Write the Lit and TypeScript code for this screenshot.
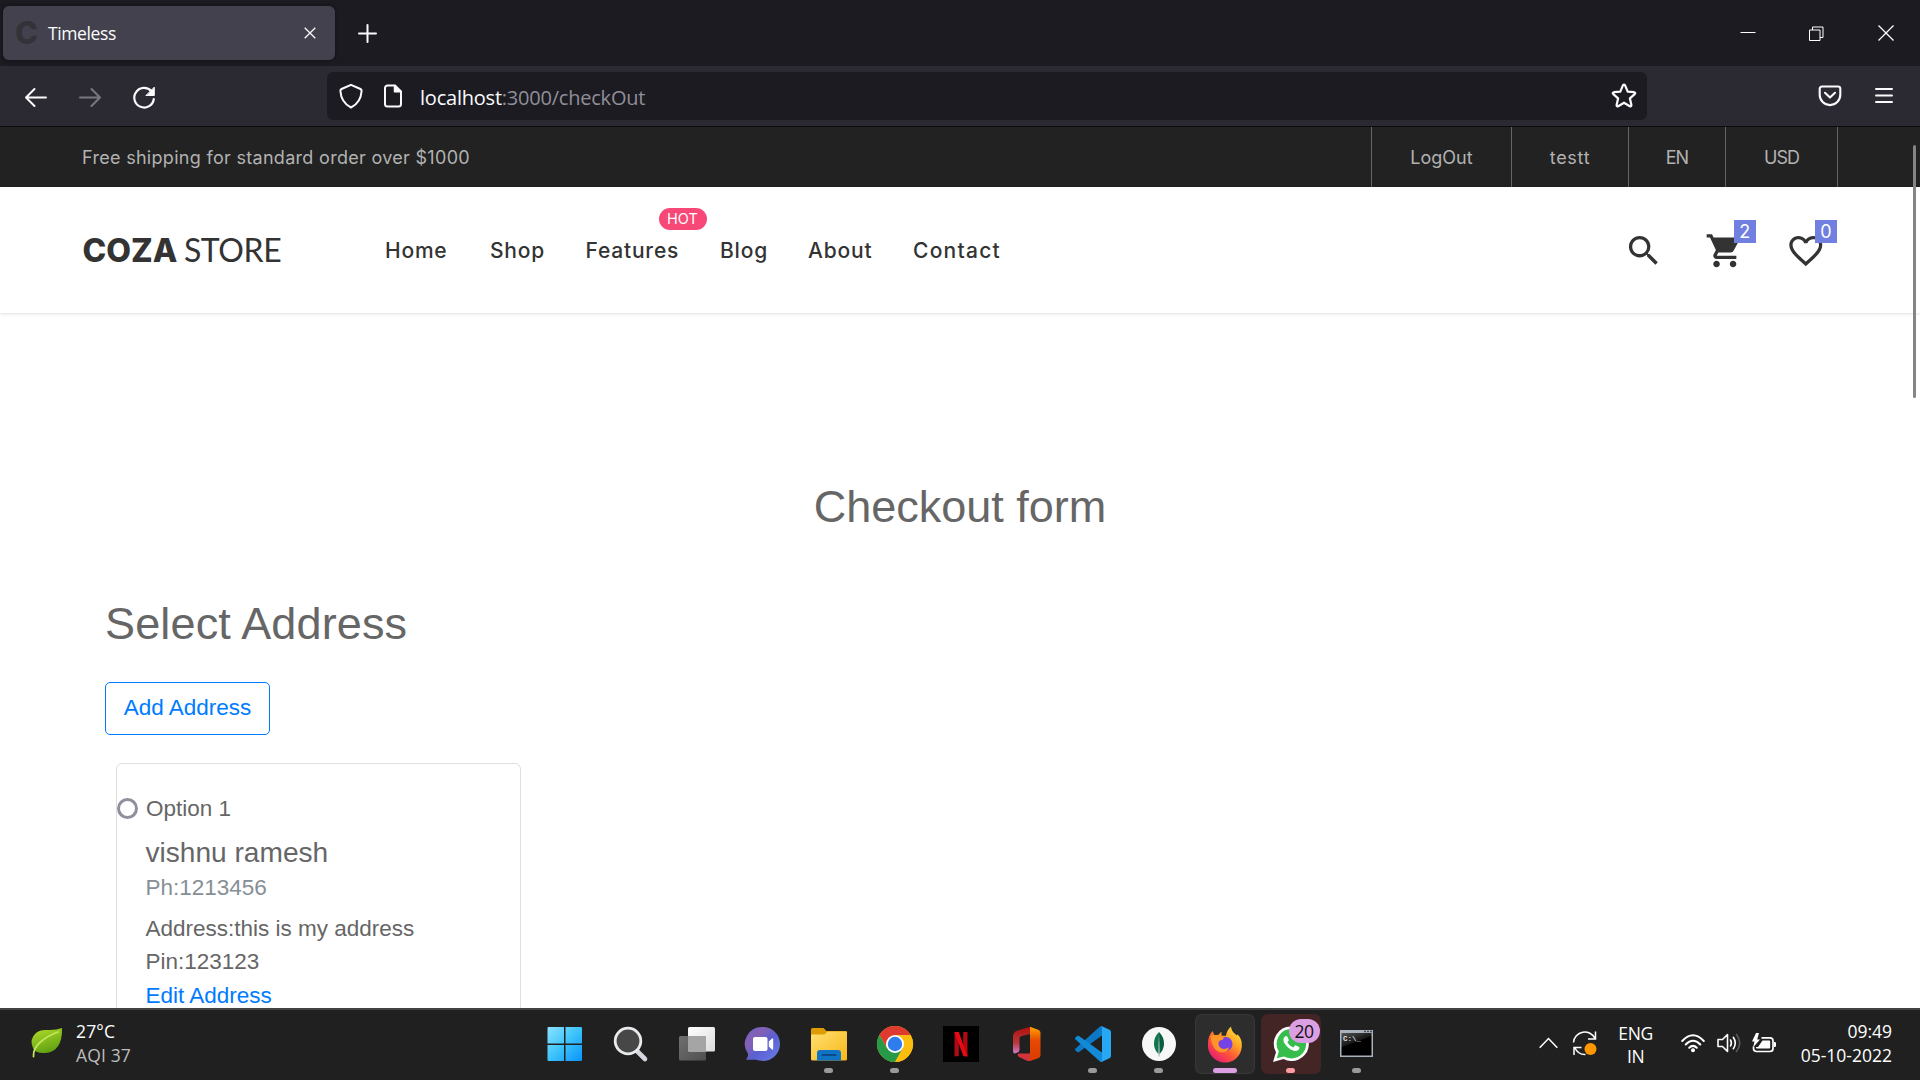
import { LitElement, html, css, svg, TemplateResult } from 'lit';
import { customElement } from 'lit/decorators.js';

@customElement('browser-chrome')
class BrowserChrome extends LitElement {
  static styles = css`
    :host { display: block; height: 127px; font-family: 'Open Sans', 'Noto Sans', sans-serif; color: #fbfbfe; }
    svg { display: block; flex: none; overflow: visible; }
    .titlebar { display: flex; align-items: center; height: 66px; background: #1c1b22; box-sizing: border-box; padding-left: 3px; }
    .tab { display: flex; align-items: center; width: 332px; height: 54px; border-radius: 6px; background: #42414d; box-sizing: border-box; padding: 0 19px 0 13px; box-shadow: 0 0 4px rgba(0,0,0,.45); }
    .favicon { width: 24px; font: 800 31px/54px 'Inter', sans-serif; color: #333337; margin-left: -1px; }
    .title { font-size: 17.5px; letter-spacing: -.38px; margin-left: 9px; flex: 1; }
    .plus { margin-left: 23px; }
    .controls { display: flex; align-items: center; margin-left: auto; padding-right: 26px; }
    .controls svg:nth-child(2) { margin-left: 53px; }
    .controls svg:nth-child(3) { margin-left: 54px; }
    .toolbar { display: flex; align-items: center; height: 61px; box-sizing: border-box; background: #2b2a33; border-bottom: 1px solid #0c0c0d; padding-left: 24px; }
    .nav { display: flex; gap: 30px; width: 303px; padding-top: 1px; }
    .url { display: flex; align-items: center; width: 1320px; height: 48px; border-radius: 6px; background: #1c1b22; box-sizing: border-box; padding: 0 10px 0 12px; }
    .doc { margin-left: 20px; }
    .address { flex: 1; font-size: 20px; letter-spacing: -.22px; margin-left: 17px; padding-top: 2px; color: #8f8f98; }
    .address b { font-weight: 400; color: #fbfbfe; }
    .pocket { margin-left: 171px; }
    .burger { margin-left: 33px; }
  `;
  render() {
    return html`
      <div class="titlebar">
        <div class="tab">
          <span class="favicon">C</span><span class="title">Timeless</span>
          <svg width="12" height="12" viewBox="0 0 12 12" stroke="#fbfbfe" stroke-width="1.3"><path d="M.7.7 11.3 11.3M11.3.7.7 11.3"/></svg>
        </div>
        <svg class="plus" width="19" height="19" viewBox="0 0 19 19" stroke="#fbfbfe" stroke-width="2" stroke-linecap="round"><path d="M9.5 1v17M1 9.5h17"/></svg>
        <div class="controls">
          <svg width="16" height="16" viewBox="0 0 16 16" stroke="#fff"><path d="M.5 7.5h15"/></svg>
          <svg width="15" height="15" viewBox="0 0 15 15" stroke="#fff" fill="none"><path d="M.5 4h10.5v10.5H.5zM3.5 4V1h10.500v10.500H11"/></svg>
          <svg width="16" height="16" viewBox="0 0 16 16" stroke="#fff" stroke-width="1.3"><path d="M.5.5l15 15M15.5.5l-15 15"/></svg>
        </div>
      </div>
      <div class="toolbar">
        <div class="nav">
          <svg width="24" height="24" viewBox="0 0 24 24" fill="none" stroke="#fbfbfe" stroke-width="2" stroke-linecap="round" stroke-linejoin="round"><path d="M22 12.500H2M10.500 4 2 12.500l8.500 8.500"/></svg>
          <svg width="24" height="24" viewBox="0 0 24 24" fill="none" stroke="#79787f" stroke-width="2" stroke-linecap="round" stroke-linejoin="round"><path d="M2 12.500h20M13.500 4l8.500 8.500-8.500 8.500"/></svg>
          <svg width="24" height="24" viewBox="0 0 24 24" fill="none" stroke="#fbfbfe" stroke-width="2.200" stroke-linecap="round"><path d="M19.500 6.300A9.800 9.800 0 1 0 21.800 14"/><path d="M22.300 2.500v8h-8z" fill="#fbfbfe" stroke-width="1" stroke-linejoin="round"/></svg>
        </div>
        <div class="url">
          <svg width="24" height="26" viewBox="0 0 24 26" fill="none" stroke="#fbfbfe" stroke-width="2" stroke-linejoin="round"><path d="M12 1.800 21.500 6c1 .5 1.200 1 1.100 2-.5 8-4.500 13.500-10.600 16.500C5.900 21.500 1.900 16 1.400 8c-.1-1 .1-1.500 1.100-2z"/></svg>
          <svg class="doc" width="20" height="24" viewBox="0 0 20 24" fill="none" stroke="#fbfbfe" stroke-width="2"><path d="M4 1.500h8L18 7.500V20a2.500 2.500 0 0 1-2.500 2.500h-11A2.500 2.500 0 0 1 2 20V4A2.500 2.500 0 0 1 4.500 1.500z"/><path d="M11.500 1.500v6.300H18z" fill="#fbfbfe" stroke-linejoin="round" stroke-width="1.500"/></svg>
          <span class="address"><b>localhost</b>:3000/checkOut</span>
          <svg width="26" height="26" viewBox="0 0 26 26" fill="none" stroke="#fbfbfe" stroke-width="2.200" stroke-linejoin="round"><path d="M11.800 2.600q1.200-1.800 2.400 0l2.500 6 6.300.6q2 .5.700 1.900l-4.800 4.300 1.500 6.500q.2 2-1.600 1.300L13 19.700l-5.800 3.500q-1.800.7-1.600-1.300l1.500-6.500-4.800-4.300q-1.300-1.400.7-1.900l6.300-.6z"/></svg>
        </div>
        <svg class="pocket" width="24" height="22" viewBox="0 0 24 22" fill="none" stroke="#fbfbfe" stroke-width="2.100" stroke-linecap="round" stroke-linejoin="round"><path d="M4 1.500h16a2.300 2.300 0 0 1 2.300 2.300v6a10.300 10.300 0 0 1-20.600 0v-6A2.300 2.300 0 0 1 4 1.500z"/><path d="m7 7.800 5 4.800 5-4.800"/></svg>
        <svg class="burger" width="18" height="18" viewBox="0 0 18 18" stroke="#fbfbfe" stroke-width="2" stroke-linecap="round"><path d="M1 2h16M1 8.500h16M1 15h16"/></svg>
      </div>`;
  }
}

const NAV: [string, number][] = [['Home', 105], ['Shop', 95.5], ['Features', 134.5], ['Blog', 88], ['About', 105], ['Contact', 95]];
const TOP: [string, number][] = [['LogOut', 140], ['testt', 117], ['EN', 97], ['USD', 112]];

@customElement('store-header')
class StoreHeader extends LitElement {
  static styles = css`
    :host { display: block; font-family: 'Inter', sans-serif; }
    .top { display: flex; align-items: center; height: 60px; background: #222; color: #b2b2b2; font-size: 18px; letter-spacing: .3px; padding: 0 82px; }
    .links { display: flex; margin-left: auto; height: 60px; border-left: 1px solid #666; }
    .links span { display: flex; align-items: center; justify-content: center; box-sizing: border-box; border-right: 1px solid #666; letter-spacing: 0; }
    .links span:nth-child(2) { letter-spacing: .7px; }
    .links span:nth-child(n+3) { letter-spacing: -1px; }
    .main { display: flex; align-items: center; height: 126px; background: #fff; box-shadow: 0 0 4px rgba(0,0,0,.2); padding: 0 81px 0 82.500px; position: relative; box-sizing: border-box; color: #333; }
    .logo { display: flex; align-items: baseline; width: 302.500px; gap: 6.500px; }
    .logo b { font: 800 32px 'Inter', sans-serif; }
    .logo span { font: 400 32px 'Lato', sans-serif; letter-spacing: -.4px; }
    .menu { display: flex; font-size: 21px; font-weight: 500; letter-spacing: .8px; }
    .menu span { position: relative; }
    .menu span:last-child { letter-spacing: 1.250px; }
    .hot { position: absolute; left: 73px; top: -29.500px; width: 48px; height: 22px; border-radius: 11px; background: #f74877; color: #fff; font: 400 14.500px/22px 'Inter', sans-serif; letter-spacing: 0; text-align: center; }
    .icons { display: flex; gap: 41.500px; margin-left: auto; padding: 1px 13.500px 0 0; }
    .icon { position: relative; }
    svg { display: block; width: 39.600px; height: 39.600px; fill: #333; }
    .badge { position: absolute; left: 29px; top: -11px; width: 22px; height: 23px; background: #717fe0; color: #fff; font-size: 18px; line-height: 23px; text-align: center; }
  `;
  render() {
    return html`
      <div class="top"><span>Free shipping for standard order over $1000</span>
        <div class="links">${TOP.map(([t, w]) => html`<span style="width:${w}px">${t}</span>`)}</div>
      </div>
      <div class="main">
        <div class="logo"><b>COZA</b><span>STORE</span></div>
        <nav class="menu">${NAV.map(([t, w]) => html`<span style="width:${w}px">${t}${t === 'Features' ? html`<i class="hot">HOT</i>` : ''}</span>`)}</nav>
        <div class="icons">
          <div class="icon"><svg viewBox="0 0 24 24"><path d="M15.500 14h-.79l-.28-.27A6.471 6.471 0 0 0 16 9.500 6.500 6.500 0 1 0 9.500 16c1.610 0 3.090-.59 4.230-1.570l.27.28v.79l5 4.990L20.490 19l-4.990-5zm-6 0C7.010 14 5 11.990 5 9.500S7.010 5 9.500 5 14 7.010 14 9.500 11.990 14 9.500 14z"/></svg></div>
          <div class="icon"><svg viewBox="0 0 24 24"><path d="M7 18c-1.100 0-1.990.9-1.990 2S5.900 22 7 22s2-.9 2-2-.9-2-2-2zM1 2v2h2l3.600 7.590-1.350 2.450c-.16.280-.25.610-.25.960 0 1.100.9 2 2 2h12v-2H7.420c-.14 0-.25-.11-.25-.25l.03-.12.900-1.630h7.450c.75 0 1.410-.41 1.750-1.030l3.580-6.490A1.003 1.003 0 0 0 20 4H5.210l-.94-2H1zm16 16c-1.100 0-1.990.9-1.990 2s.89 2 1.990 2 2-.9 2-2-.9-2-2-2z"/></svg><span class="badge">2</span></div>
          <div class="icon"><svg viewBox="0 0 24 24"><path d="M16.500 3c-1.740 0-3.410.81-4.500 2.090C10.910 3.810 9.240 3 7.500 3 4.420 3 2 5.420 2 8.500c0 3.780 3.400 6.860 8.550 11.540L12 21.350l1.450-1.320C18.600 15.360 22 12.280 22 8.500 22 5.420 19.580 3 16.500 3zm-4.400 15.550l-.1.100-.1-.1C7.140 14.240 4 11.390 4 8.500 4 6.500 5.500 5 7.500 5c1.540 0 3.040.99 3.570 2.360h1.870C13.460 5.990 14.960 5 16.500 5c2 0 3.500 1.500 3.500 3.500 0 2.890-3.140 5.740-7.900 10.050z"/></svg><span class="badge">0</span></div>
        </div>
      </div>`;
  }
}

@customElement('checkout-page')
class CheckoutPage extends LitElement {
  static styles = css`
    :host { display: block; font-family: 'Liberation Sans', Arial, sans-serif; color: #666; font-size: 22.500px; line-height: 33.750px; padding: 167px 105px 0; }
    h2 { margin: 0; font-size: 45px; font-weight: 400; line-height: 54px; letter-spacing: .15px; }
    .title { text-align: center; margin-bottom: 63px; letter-spacing: 0; }
    .add { display: flex; align-items: center; justify-content: center; width: 165px; height: 53px; box-sizing: border-box; border: 1px solid #007bff; border-radius: 5px; color: #007bff; margin: 31px 0 28px; padding-bottom: 1px; }
    .card { margin-left: 11px; width: 405px; height: 400px; box-sizing: border-box; border: 1px solid #dfdfdf; border-radius: 6px; padding-top: 28px; }
    .option { display: flex; align-items: center; gap: 8px; }
    .radio { width: 21px; height: 21px; box-sizing: border-box; border: 3px solid #8f8f9d; border-radius: 50%; }
    .info { padding-left: 28.500px; }
    .name { font-size: 28.100px; line-height: 34px; margin-top: 10px; }
    .phone { color: #868e96; margin: 1px 0 7px; }
    .edit { color: #007bff; }
  `;
  render() {
    return html`
      <h2 class="title">Checkout form</h2>
      <h2>Select Address</h2>
      <div class="add">Add Address</div>
      <div class="card">
        <div class="option"><span class="radio"></span><span>Option 1</span></div>
        <div class="info">
          <div class="name">vishnu ramesh</div>
          <div class="phone">Ph:1213456</div>
          <div>Address:this is my address</div>
          <div>Pin:123123</div>
          <div class="edit">Edit Address</div>
        </div>
      </div>`;
  }
}

const APPS: { art: TemplateResult; mark?: string; box?: string; count?: string }[] = [
  { art: svg`<defs><linearGradient id="w" gradientUnits="userSpaceOnUse" x1="1" y1="1" x2="35" y2="35"><stop offset="0" stop-color="#8be2ff"/><stop offset=".5" stop-color="#3cc3fb"/><stop offset="1" stop-color="#0a93fb"/></linearGradient></defs><path fill="url(#w)" d="M1.500 1H17v16.500H.500V2q0-1 1-1zM18.500 1H34q1 0 1 1v15.500H18.500zM.500 19H17v16H1.500q-1 0-1-1zM18.500 19H35v15q0 1-1 1H18.500z"/>` },
  { art: svg`<path d="m24 25 8 8" stroke="#d4d6de" stroke-width="4.600" stroke-linecap="round"/><circle cx="15" cy="15" r="12.800" fill="#474747" stroke="#e9eaee" stroke-width="2.800"/>` },
  { art: svg`<defs><linearGradient id="t1" x1="0" y1="0" x2="1" y2="1"><stop stop-color="#fff"/><stop offset="1" stop-color="#dcdcdc"/></linearGradient><linearGradient id="t2" x1="0" y1="0" x2="1" y2="1"><stop stop-color="#707070"/><stop offset="1" stop-color="#505050"/></linearGradient></defs><rect x="0" y="10" width="27" height="24.500" rx="1.500" fill="url(#t2)"/><rect x="9" y="1" width="27" height="24.500" rx="1.500" fill="url(#t1)"/><path d="M9 10h18v15.500H10.500Q9 25.500 9 24z" fill="#a5a5a5"/>` },
  { art: svg`<defs><linearGradient id="m" x1="0" y1="0" x2="1" y2="1"><stop stop-color="#6b62c8"/><stop offset=".3" stop-color="#8560b4"/><stop offset=".55" stop-color="#5b5fd0"/><stop offset="1" stop-color="#6a80e6"/></linearGradient></defs><path fill="url(#m)" d="M18 1a17 17 0 1 1 0 34q-4-.2-7-1.200H1q2.500-3.500 2-6A17 17 0 0 1 18 1z" /><rect x="8" y="11" width="14.500" height="14" rx="2" fill="#fff"/><path d="M23.800 15.500l3.200-3q1.200-.5 1.200.8v9.500q0 1.300-1.200.8l-3.200-3z" fill="#fff"/>` },
  { art: svg`<defs><linearGradient id="e" x1="0" y1="0" x2="1" y2="1"><stop stop-color="#ffdf74"/><stop offset="1" stop-color="#f9b816"/></linearGradient></defs><path fill="#dd9c04" d="M1.500 2h11l3 3H34q2 0 2 2v6H0V3.500Q0 2 1.500 2z"/><path fill="url(#e)" d="M0 8.500h13.500l3-3H36V33q0 1.500-1.500 1.500h-33Q0 34.500 0 33z"/><path fill="#0f74c5" d="M6 34.500V27q0-3 3-3h18q3 0 3 3v7.500z"/><path d="M11.500 29h13" stroke="#0b4a86" stroke-width="1.800" stroke-linecap="round"/>`, mark: 'dot' },
  { art: svg`<circle cx="18" cy="18" r="18" fill="#fdbd0e"/><path fill="#df3a2f" d="M2.400 9A18 18 0 0 1 33.600 9H18L9 20z"/><path fill="#269a49" d="M2.400 9A18 18 0 0 0 18 36l7.700-13.500L10.200 22.500z"/><path fill="#fdbd0e" d="M18 9h15.600A18 18 0 0 1 18 36l8-14z"/><circle cx="18" cy="18" r="9" fill="#fff"/><circle cx="18" cy="18" r="7.200" fill="#2f7cec"/>`, mark: 'dot' },
  { art: svg`<path fill="#000" d="M0 0h36v36H0z"/><path fill="#b00b12" d="M11.500 6h4.300v24q-2.200.1-4.300.5zM20.200 6h4.300v24.500q-2.100-.4-4.300-.5z"/><path fill="#e50a15" d="M11.500 6h4.300l8.700 24.500q-2.200-.3-4.200-.5z"/>` },
  { art: svg`<defs><linearGradient id="o" x1="0" y1="0" x2="0" y2="1"><stop stop-color="#b00f0c"/><stop offset=".6" stop-color="#b8383c"/><stop offset="1" stop-color="#d57ad0"/></linearGradient><linearGradient id="o2" x1="0" y1="0" x2="0" y2="1"><stop stop-color="#ffa400"/><stop offset=".4" stop-color="#e84a05"/><stop offset="1" stop-color="#d83b01"/></linearGradient></defs><path fill="url(#o)" d="M21.500.8 8.500 4.500Q4 6 4 10v15q0 2.500 2 2.500L9.500 26q1-.8 1-2.500V12.500q0-2 2-2.500l9-2z"/><path fill="url(#o2)" d="M21 .8 28.500 3.500Q31.500 4.500 31.500 7v22q0 2.500-3 3.500l-7.500 2.500z"/><path fill="#d3343a" d="M9.500 27.500H21V35q-1.500.2-3-.3l-8-3.800q-2.500-1.700-.5-3.400z"/>` },
  { art: svg`<path fill="#0b79c6" d="M.5 24.500q-1-1 0-2L25 .6Q26 0 27 0v9.500L4 26q-1 .6-1.800 0z"/><path fill="#138ad8" d="M.5 11.500q-1 1 0 2L25 35.400Q26 36 27 36v-9.500L4 10q-1-.6-1.800 0z"/><path fill="#28a8f3" d="M25.500.4Q26.500 0 27.500.4l7 3.400Q36 4.600 36 6v24q0 1.400-1.500 2.200l-7 3.400q-1.500.6-2.500-.4 2 .8 2-1.700V2.200Q27 0 25.500.4z"/>`, mark: 'dot' },
  { art: svg`<circle cx="18" cy="18" r="17" fill="#f7f7f7"/><path fill="#10774c" d="M18 6q-5.500 5.500-5 12.500.4 5.500 4.500 9.500z"/><path fill="#0c5c40" d="M18 6q5.500 5.500 5 12.500-.4 5.500-4.500 9.500z"/><path d="M18 16v14.500" stroke="#7d9c90" stroke-width=".8"/>`, mark: 'dot' },
  { art: svg`<defs><linearGradient id="f" x1="1" y1="0" x2=".2" y2="1"><stop stop-color="#fff04a"/><stop offset=".35" stop-color="#ffae25"/><stop offset=".65" stop-color="#ff5638"/><stop offset="1" stop-color="#e3157c"/></linearGradient></defs><path fill="url(#f)" d="M3 8.500 5.500 5l2 4.200 4-.4 3-3.300v4q3 .5 4.500.2.5-5 5-9.200.5 5 4 7.200l1.500 1.800 1-1.200q5 5 4.300 12.500A16.900 16.900 0 0 1 1 18.500Q1 12 3 8.500z"/><circle cx="18.500" cy="18" r="7" fill="#7542e5"/><path fill="#ff9527" d="M3.500 10q5-2 9.500 0l3.500 1.500q1 2-3.500 3-2.500 1-1.500 4.500 2 4.500 7 3.800l3.500-1.300q-2 5.500-8.500 4.800Q5 24.500 3.500 10z"/>`, mark: 'wide', box: 'active' },
  { art: svg`<path fill="#fff" d="M18.500.5a17.300 17.300 0 1 1-8 32.600L0 36l3-9.800A17.300 17.300 0 0 1 18.500.5z"/><path fill="#37bd4b" d="M18.500 3a14.700 14.700 0 1 1-7.400 27.400L3.800 32.300l2-7A14.700 14.700 0 0 1 18.500 3z"/><path fill="#fff" transform="translate(2.500 1.700) scale(1.320)" d="M17.472 14.382c-.297-.149-1.758-.867-2.030-.967-.273-.099-.471-.148-.67.15-.197.297-.767.966-.94 1.164-.173.199-.347.223-.644.075-.297-.15-1.255-.463-2.390-1.475-.883-.788-1.480-1.761-1.653-2.059-.173-.297-.018-.458.13-.606.134-.133.298-.347.446-.52.149-.174.198-.298.298-.497.099-.198.05-.371-.025-.52-.075-.149-.669-1.612-.916-2.207-.242-.579-.487-.5-.669-.51-.173-.008-.371-.01-.57-.01-.198 0-.52.074-.792.372-.272.297-1.040 1.016-1.040 2.479 0 1.462 1.065 2.875 1.213 3.074.149.198 2.096 3.200 5.077 4.487.709.306 1.262.489 1.694.625.712.227 1.360.195 1.871.118.571-.085 1.758-.719 2.006-1.413.248-.694.248-1.289.173-1.413-.074-.124-.272-.198-.57-.347"/>`, mark: 'pink', box: 'alert', count: '20' },
  { art: svg`<defs><linearGradient id="c" x1="0" y1="0" x2=".5" y2="1"><stop stop-color="#555"/><stop offset=".5" stop-color="#161616"/><stop offset=".52" stop-color="#000"/></linearGradient></defs><path fill="#aab2bd" d="M1 4h33v27H1z"/><path fill="url(#c)" d="M2.500 7h30v22.500h-30z"/><path fill="#444b55" d="M25 4.800h2v1.400h-2zm3 0h2v1.400h-2zm3 0h2v1.400h-2z"/><text x="4" y="14.500" font-family="Liberation Mono" font-weight="700" font-size="7.500" fill="#ddd">C:\\_</text>`, mark: 'dot' },
];

@customElement('task-bar')
class TaskBar extends LitElement {
  static styles = css`
    :host { display: grid; grid-template-columns: 534.500px 1fr auto; height: 72px; box-sizing: border-box; background: #202020; border-top: 2px solid #424242; font: 17.500px/24px 'Open Sans', 'Noto Sans', sans-serif; color: #fff; position: relative; }
    svg { display: block; flex: none; overflow: visible; }
    .weather { display: flex; padding: 17px 0 0 30px; gap: 13px; }
    .weather p { margin: -8px 0 0; letter-spacing: .15px; }
    .dim { color: #bdbdbd; }
    .apps { display: flex; gap: 6px; padding-top: 4px; }
    .app { width: 60px; height: 60px; box-sizing: border-box; border-radius: 7px; display: flex; flex-direction: column; align-items: center; padding-top: 12px; position: relative; }
    .active { background: #2d2d2d; box-shadow: inset 0 0 0 1px #383838; }
    .alert { background: #442526; }
    .mark { width: 9px; height: 5px; border-radius: 3px; background: #9a9a9a; margin-top: 6px; }
    .wide { width: 24px; background: #dc9fe4; }
    .pink { background: #fc9da0; }
    .count { position: absolute; left: 28px; top: 5px; width: 31px; height: 24px; border-radius: 12px; background: #dc9fe4; color: #111; text-align: center; line-height: 24px; letter-spacing: -.6px; }
    .tray { display: flex; align-items: center; padding-right: 28px; box-sizing: border-box; height: 66px; }
    .sync { margin-left: 14px; }
    .lang { width: 36px; margin-left: 20px; text-align: center; line-height: 23px; letter-spacing: -.3px; white-space: nowrap; padding-top: 3px; }
    .wifi { margin-left: 27px; }
    .vol { margin-left: 12px; }
    .bat { margin-left: 11px; }
    .clock { margin-left: 25px; text-align: right; letter-spacing: 0; }
  `;
  render() {
    return html`
      <div class="weather">
        <svg width="33" height="32" viewBox="0 0 33 32"><defs><linearGradient id="l" x1="0" y1="0" x2=".4" y2="1"><stop stop-color="#b4de2c"/><stop offset="1" stop-color="#63a312"/></linearGradient></defs><path fill="url(#l)" d="M32 1Q32.500 25 15 26 5 26.500 3 21-1 12 6 6q4-3.500 11-3Q26 3.500 32 1z"/><path d="M3.500 29.500Q3 21 11 14.500T28 5" fill="none" stroke="#c3e75b" stroke-width="1.800" stroke-linecap="round"/></svg>
        <p>27°C<br><span class="dim">AQI 37</span></p>
      </div>
      <div class="apps">${APPS.map(a => html`<div class="app ${a.box ?? ''}"><svg width="36" height="36" viewBox="0 0 36 36">${a.art}</svg>${a.mark ? html`<span class="mark ${a.mark}"></span>` : ''}${a.count ? html`<span class="count">${a.count}</span>` : ''}</div>`)}</div>
      <div class="tray">
        <svg width="19" height="12" viewBox="0 0 19 12" fill="none" stroke="#fff" stroke-width="1.500"><path d="M.7 10.800 9.500 1.500l8.800 9.300"/></svg>
        <svg class="sync" width="26" height="26" viewBox="0 0 26 26" fill="none" stroke="#fff" stroke-width="1.500"><path d="M1.500 12.500A11.300 11.300 0 0 1 23 8.500M23.500 1.500V9H16M13.500 24.500A11 11 0 0 1 3 18M2 25v-7.500h7.500"/><circle cx="18.500" cy="19" r="6" fill="#ff9800" stroke="none"/></svg>
        <div class="lang">ENG<br>IN</div>
        <svg class="wifi" width="24" height="20" viewBox="0 0 24 20" fill="none" stroke="#fff" stroke-width="2" stroke-linecap="round"><path d="M1.200 8Q12-3.500 22.800 8M4.700 11.500q7.300-7.500 14.600 0M8.200 14.800q3.800-3.800 7.600 0"/><circle cx="12" cy="17.300" r="2" fill="#fff" stroke="none"/></svg>
        <svg class="vol" width="24" height="20" viewBox="0 0 24 20" fill="none" stroke="#fff" stroke-width="1.600" stroke-linejoin="round" stroke-linecap="round"><path d="M1 6.500h4.500L10.500 1.500v17L5.500 13.500H1z"/><path d="M13.500 7q1.800 3 0 6M16.300 4.300q4 5.700 0 11.400"/><path d="M19.500 1.500q6.500 8.500 0 17" stroke="#5a5a5a"/></svg>
        <svg class="bat" width="24" height="21" viewBox="0 0 24 21"><path d="M9.500 4.800H18q3 0 3 3v7.700q0 3-3 3H4.500q-3 0-3-3v-2" fill="none" stroke="#fff" stroke-width="1.700"/><path d="M10.500 7.500h6.700q1 0 1 1v6q0 1-1 1H5q-1 0-1-1v-.5h2zM22 9h.7q1.300 0 1.300 1.200v2.600Q24 14 22.700 14H22zM4 0 0 8.500h2.500L1 14.500 8 6.500H5.200L7 0z" fill="#fff"/></svg>
        <div class="clock">09:49<br>05-10-2022</div>
      </div>`;
  }
}

@customElement('app-root')
class AppRoot extends LitElement {
  static styles = css`
    :host { display: flex; flex-direction: column; width: 1920px; height: 1080px; overflow: hidden; background: #fff; position: relative; }
    .page { flex: 1; min-height: 0; overflow: hidden; position: relative; }
    .scroll { position: absolute; right: 4px; top: 18px; width: 3px; height: 253px; border-radius: 2px; background: #858585; }
  `;
  render() {
    return html`
      <browser-chrome></browser-chrome>
      <div class="page"><store-header></store-header><checkout-page></checkout-page><div class="scroll"></div></div>
      <task-bar></task-bar>`;
  }
}
